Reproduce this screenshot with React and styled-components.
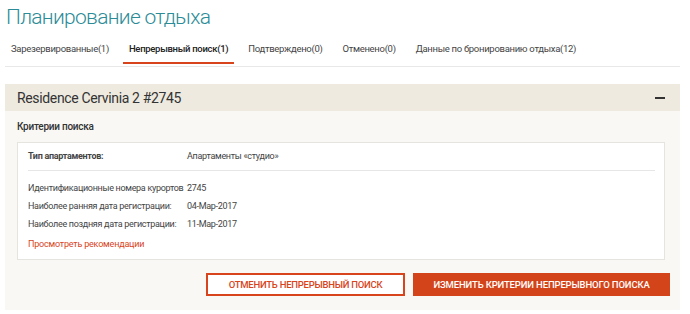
import React from "react";
import styled, { createGlobalStyle } from "styled-components";

const GlobalStyle = createGlobalStyle`
  body {
    margin: 0;
    background: #fff;
    font-family: "Roboto", "Open Sans", sans-serif;
    color: #333;
  }
`;

const tabs = [
  { label: "Зарезервированные(1)" },
  { label: "Непрерывный поиск(1)", active: true },
  { label: "Подтверждено(0)" },
  { label: "Отменено(0)" },
  { label: "Данные по бронированию отдыха(12)" },
];

const details = [
  { label: "Идентификационные номера курортов", value: "2745" },
  { label: "Наиболее ранняя дата регистрации:", value: "04-Мар-2017" },
  { label: "Наиболее поздняя дата регистрации:", value: "11-Мар-2017" },
];

const App = () => {
  return (
    <>
      <GlobalStyle />
      <Page>
        <Title>Планирование отдыха</Title>
        <Tabs>
          {tabs.map((t) => (
            <Tab key={t.label} active={t.active}>
              {t.label}
            </Tab>
          ))}
        </Tabs>
        <Panel>
          <PanelHeader>
            <PanelTitle>Residence Cervinia 2 #2745</PanelTitle>
            <Collapse />
          </PanelHeader>
          <PanelBody>
            <SectionTitle>Критерии поиска</SectionTitle>
            <CriteriaBox>
              <Row bold>
                <Label>Тип апартаментов:</Label>
                <Value>Апартаменты «студио»</Value>
              </Row>
              <Divider />
              {details.map((d) => (
                <Row key={d.label}>
                  <Label>{d.label}</Label>
                  <Value>{d.value}</Value>
                </Row>
              ))}
              <Link>Просмотреть рекомендации</Link>
            </CriteriaBox>
            <Actions>
              <OutlineButton>Отменить непрерывный поиск</OutlineButton>
              <FilledButton>Изменить критерии непрерывного поиска</FilledButton>
            </Actions>
          </PanelBody>
        </Panel>
      </Page>
    </>
  );
};

export default App;

const Page = styled.div`
  width: 690px;
  padding: 0 10px 0 5px;
  box-sizing: border-box;
`;

const Title = styled.h1`
  margin: 0;
  padding: 3px 0 0 1px;
  font-size: 21px;
  font-weight: 300;
  letter-spacing: -0.7px;
  color: #2b8b97;
  line-height: 28px;
`;

const Tabs = styled.div`
  display: flex;
  gap: 20px;
  padding: 0 0 2px 6px;
  border-bottom: 1px solid #e8e8e8;
`;

const Tab = styled.div`
  padding: 12px 6px 7px;
  margin: 0 -6px;
  font-size: 9.5px;
  line-height: 12px;
  letter-spacing: -0.3px;
  font-weight: ${(p) => (p.active ? 500 : 400)};
  color: ${(p) => (p.active ? "#222" : "#444")};
  border-bottom: 2px solid ${(p) => (p.active ? "#d8441b" : "transparent")};
`;

const Panel = styled.div`
  margin-top: 17px;
  background: #f9f8f5;
`;

const PanelHeader = styled.div`
  display: flex;
  align-items: center;
  justify-content: space-between;
  height: 27px;
  padding: 0 15px 0 12px;
  background: #eeeae0;
`;

const PanelTitle = styled.div`
  font-size: 14px;
  letter-spacing: -0.35px;
  color: #333;
`;

const Collapse = styled.span`
  width: 10px;
  height: 2px;
  background: #333;
`;

const PanelBody = styled.div`
  padding: 9px 15px 14px 12px;
`;

const SectionTitle = styled.div`
  font-size: 10px;
  line-height: 14px;
  letter-spacing: -0.25px;
  font-weight: 500;
  color: #333;
  margin-bottom: 8px;
`;

const CriteriaBox = styled.div`
  background: #fff;
  border: 1px solid #e6e4df;
  padding: 6px 9px 8px 10px;
`;

const Row = styled.div`
  display: flex;
  align-items: center;
  height: ${(p) => (p.bold ? "14px" : "18px")};
  font-size: 9px;
  letter-spacing: -0.3px;
  color: #444;
  font-weight: ${(p) => (p.bold ? 700 : 400)};
  ${(p) => (p.bold ? "margin-bottom: 7px;" : "")}
`;

const Label = styled.span`
  width: 159px;
  flex-shrink: 0;
  white-space: nowrap;
`;

const Value = styled.span`
  font-weight: 400;
`;

const Divider = styled.div`
  height: 1px;
  background: #e6e6e6;
  margin-bottom: 8px;
`;

const Link = styled.a`
  display: block;
  margin-top: 4px;
  font-size: 9px;
  line-height: 14px;
  letter-spacing: -0.2px;
  color: #d8441b;
  cursor: pointer;
`;

const Actions = styled.div`
  display: flex;
  justify-content: flex-end;
  gap: 8px;
  margin: 13px -5px 0 0;
`;

const OutlineButton = styled.button`
  width: 199px;
  height: 23px;
  background: #fff;
  border: 2px solid #d8441b;
  color: #d8441b;
  font-family: inherit;
  font-size: 9.5px;
  letter-spacing: -0.25px;
  font-weight: 500;
  text-transform: uppercase;
`;

const FilledButton = styled.button`
  width: 257px;
  height: 23px;
  background: #d4441a;
  border: none;
  color: #fff;
  font-family: inherit;
  font-size: 9.5px;
  letter-spacing: -0.15px;
  font-weight: 500;
  text-transform: uppercase;
`;
